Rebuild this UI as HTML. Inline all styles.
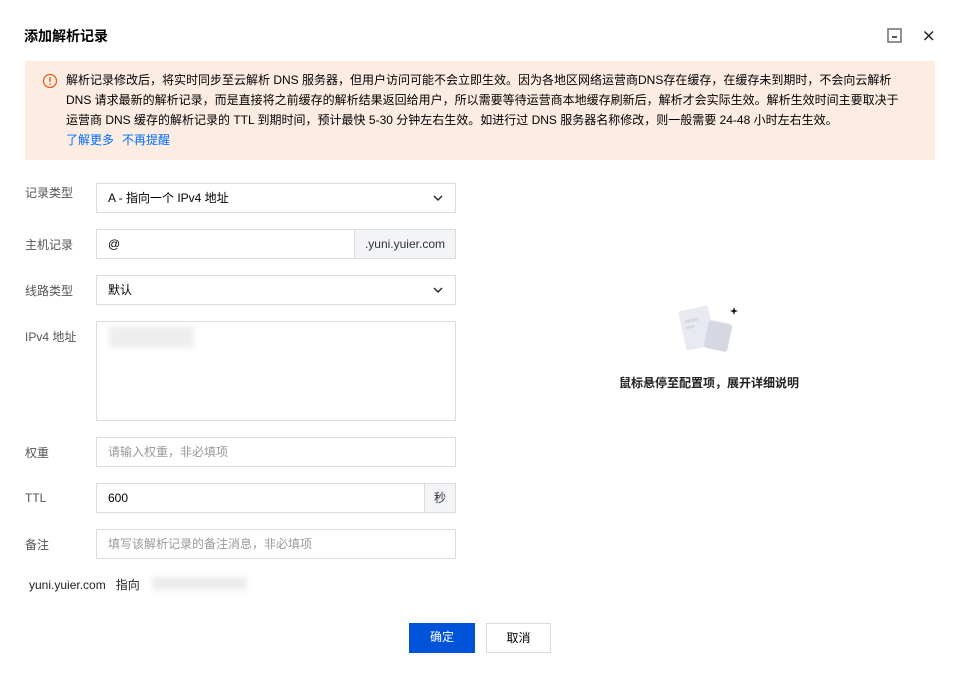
<!DOCTYPE html>
<html><head><meta charset="utf-8"><style>
*{box-sizing:border-box;margin:0;padding:0}
body{width:961px;height:678px;background:#fff;font-family:"Liberation Sans","Noto Sans CJK SC",sans-serif;font-size:12px;color:#000;position:relative;overflow:hidden}
.abs{position:absolute}
.title{left:24px;top:27px;font-size:14px;font-weight:bold;color:#000;line-height:18px}
.alert{left:25px;top:61px;width:910px;height:99px;background:#fdece2}
.alert .txt{position:absolute;left:41px;top:9px;width:860px;line-height:20px;color:#000;font-size:12px;white-space:nowrap}
.alert a{color:#006eff;text-decoration:none;margin-right:8px}
.label{left:25px;color:#555;font-size:12px;line-height:14px}
.field{left:96px;width:360px;height:30px;border:1px solid #dcdcdc;background:#fff;padding:0 11px;line-height:28px;color:#000}
.ph{color:#999}
.addon{position:absolute;top:-1px;right:-1px;height:30px;border:1px solid #dcdcdc;background:#f3f4f7;line-height:28px;padding:0 10px;color:#333}
.chev{position:absolute;right:12px;top:10px}
.btn{height:30px;line-height:28px;text-align:center;font-size:12px}
</style></head><body>
<div class="abs title">添加解析记录</div>
<svg class="abs" style="left:887px;top:28px" width="16" height="16"><rect x="1" y="1" width="13" height="13" fill="none" stroke="#777" stroke-width="1.6"/><rect x="5" y="8" width="5" height="2" fill="#555"/></svg>
<svg class="abs" style="left:923px;top:30px" width="12" height="12"><path d="M1.5 1.5L10 10M10 1.5L1.5 10" stroke="#222" stroke-width="1.5"/></svg>
<div class="abs alert">
<svg class="abs" style="left:17px;top:12px" width="16" height="16"><circle cx="8" cy="8" r="6.5" fill="none" stroke="#e0611f" stroke-width="1.3"/><rect x="7.3" y="4" width="1.4" height="5" fill="#e0611f"/><rect x="7.3" y="10.3" width="1.4" height="1.4" fill="#e0611f"/></svg>
<div class="txt">解析记录修改后，将实时同步至云解析 DNS 服务器，但用户访问可能不会立即生效。因为各地区网络运营商DNS存在缓存，在缓存未到期时，不会向云解析<br>DNS 请求最新的解析记录，而是直接将之前缓存的解析结果返回给用户，所以需要等待运营商本地缓存刷新后，解析才会实际生效。解析生效时间主要取决于<br>运营商 DNS 缓存的解析记录的 TTL 到期时间，预计最快 5-30 分钟左右生效。如进行过 DNS 服务器名称修改，则一般需要 24-48 小时左右生效。<br><a>了解更多</a><a>不再提醒</a></div>
</div>

<div class="abs label" style="top:186px">记录类型</div>
<div class="abs field" style="top:183px">A - 指向一个 IPv4 地址<svg class="chev" width="10" height="8"><path d="M1 2l4 4 4-4" fill="none" stroke="#222" stroke-width="1.4"/></svg></div>

<div class="abs label" style="top:238px">主机记录</div>
<div class="abs field" style="top:229px">@<span class="addon">.yuni.yuier.com</span></div>

<div class="abs label" style="top:284px">线路类型</div>
<div class="abs field" style="top:275px">默认<svg class="chev" width="10" height="8"><path d="M1 2l4 4 4-4" fill="none" stroke="#222" stroke-width="1.4"/></svg></div>

<div class="abs label" style="top:330px">IPv4 地址</div>
<div class="abs field" style="top:321px;height:100px"><div style="position:absolute;left:12px;top:4px;width:85px;height:22px;background:#eee;filter:blur(3px)"></div></div>

<div class="abs label" style="top:446px">权重</div>
<div class="abs field ph" style="top:437px">请输入权重，非必填项</div>

<div class="abs label" style="top:491px">TTL</div>
<div class="abs field" style="top:483px">600<span class="addon" style="padding:0 9px">秒</span></div>

<div class="abs label" style="top:538px">备注</div>
<div class="abs field ph" style="top:529px">填写该解析记录的备注消息，非必填项</div>

<div class="abs" style="left:29px;top:578px;color:#222;line-height:14px">yuni.yuier.com &nbsp;&nbsp;指向</div>
<div class="abs" style="left:152px;top:577px;width:95px;height:13px;background:#ececec;filter:blur(3px)"></div>

<svg class="abs" style="left:676px;top:302px" width="66" height="56">
<rect x="6" y="6" width="30" height="40" rx="2" fill="#e9eaf1" transform="rotate(-12 21 26)"/>
<rect x="10" y="16" width="14" height="3" fill="#d6d8e2" transform="rotate(-12 21 26)"/>
<rect x="10" y="22" width="9" height="3" fill="#d6d8e2" transform="rotate(-12 21 26)"/>
<rect x="30" y="20" width="24" height="28" rx="3" fill="#d5d8e3" transform="rotate(12 42 34)"/>
<path d="M58 5l1 3 3 1-3 1-1 3-1-3-3-1 3-1z" fill="#111"/>
</svg>
<div class="abs" style="left:619px;top:376px;font-weight:bold;color:#222;line-height:14px">鼠标悬停至配置项，展开详细说明</div>

<div class="abs btn" style="left:409px;top:623px;width:66px;background:#0052d9;color:#fff">确定</div>
<div class="abs btn" style="left:486px;top:623px;width:65px;border:1px solid #dcdcdc;color:#000">取消</div>
</body></html>
